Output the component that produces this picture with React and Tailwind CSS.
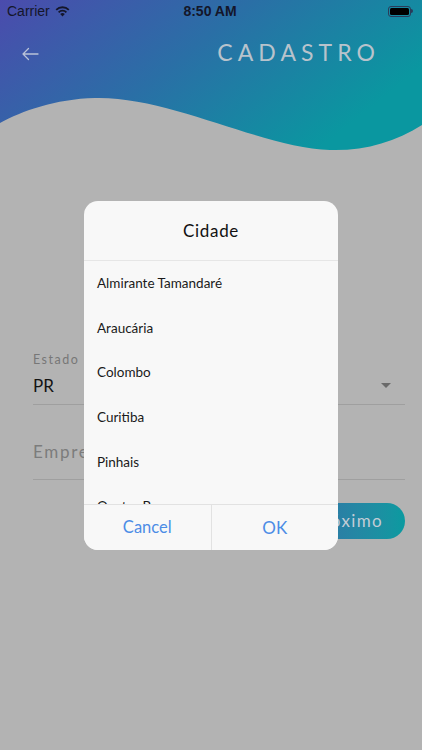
import React from "react";

const cities = ["Almirante Tamandaré", "Araucária", "Colombo", "Curitiba", "Pinhais", "Quatro Barras"];

export default function App() {
  return (
    <div className="relative w-[422px] h-[750px] overflow-hidden bg-[#b3b3b3]" style={{ fontFamily: "Lato, 'Noto Sans', sans-serif" }}>
      {/* Header */}
      <div className="relative h-[160px]">
        <svg className="absolute inset-0" width="422" height="160" viewBox="0 0 422 160">
          <defs>
            <linearGradient id="hg" x1="0" y1="0" x2="1" y2="0.45">
              <stop offset="0" stopColor="#4b4bad" />
              <stop offset="0.5" stopColor="#2a6fa6" />
              <stop offset="1" stopColor="#0a97a0" />
            </linearGradient>
          </defs>
          <path d="M0 0 H422 V125 C395 142 365 151 330 150 C262 148 170 96 95 98 C55 99 22 111 0 123 Z" fill="url(#hg)" />
        </svg>
        <div className="relative flex flex-col">
          {/* status bar */}
          <div className="h-[22px] flex items-center px-[7px] text-[#14162a]" style={{ fontFamily: "'Liberation Sans', Arial, sans-serif" }}>
            <div className="flex-1 flex items-center gap-[5px] text-[14px]">
              <span>Carrier</span>
              <svg width="15" height="11" viewBox="0 0 15 11">
                <path d="M7.5 10.5 L5.2 8 A3.3 3.3 0 0 1 9.8 8 Z" fill="#14162a" />
                <path d="M3.6 6.3 A5.6 5.6 0 0 1 11.4 6.3" stroke="#14162a" strokeWidth="1.8" fill="none" />
                <path d="M1.2 3.8 A9 9 0 0 1 13.8 3.8" stroke="#14162a" strokeWidth="1.8" fill="none" />
              </svg>
            </div>
            <div className="flex-1 text-center text-[14px] font-bold">8:50 AM</div>
            <div className="flex-1 flex justify-end pr-[2px]">
              <div className="flex items-center">
                <div className="w-[23px] h-[11px] rounded-[3px] border border-[#2a3c5a] p-[1px]">
                  <div className="w-full h-full rounded-[1.5px] bg-[#000]" />
                </div>
                <div className="w-[1.5px] h-[4px] bg-[#2a3c5a] rounded-r-sm" />
              </div>
            </div>
          </div>
          {/* nav */}
          <div className="h-[60px] flex items-center justify-between pl-[21px] pr-[47px]">
            <svg width="18" height="14" viewBox="0 0 18 14" className="mt-[3px]">
              <path d="M17 7 H2 M7.5 1.5 L2 7 L7.5 12.5" stroke="#b9c2d8" strokeWidth="1.3" fill="none" strokeLinecap="round" strokeLinejoin="round" />
            </svg>
            <span className="text-[23px] tracking-[0.22em] text-[#b8c3cc] mr-[-5px]">CADASTRO</span>
          </div>
        </div>
      </div>

      {/* Form */}
      <div className="flex flex-col pl-[33px] pr-[17px] pt-[191px]">
        <span className="text-[12.5px] tracking-[0.12em] text-[#777]">Estado</span>
        <div className="flex items-center justify-between border-b border-[#9f9f9f] h-[35px] pb-[2px]">
          <span className="text-[17px] text-[#141414]">PR</span>
          <svg width="12" height="7" viewBox="0 0 12 7" className="mr-[13px]">
            <path d="M1 1 H11 L6 6 Z" fill="#6a6a6a" />
          </svg>
        </div>
        <div className="flex items-center border-b border-[#9f9f9f] h-[75px] pt-[20px]">
          <span className="text-[17px] tracking-[0.1em] text-[#7c7c7c]">Empresa</span>
        </div>
        <div className="flex justify-end mt-[23px]">
          <div className="w-[180px] h-[36px] rounded-full bg-gradient-to-r from-[#3b4fa9] to-[#0a9aa0] flex items-center justify-end pr-[22px]">
            <span className="text-[17px] tracking-[0.08em] text-[#c3ccd6]">Próximo</span>
          </div>
        </div>
      </div>

      {/* Dialog */}
      <div className="absolute left-[84px] top-[201px] w-[254px] h-[349px] rounded-[14px] bg-[#f8f8f8] flex flex-col overflow-hidden">
        <div className="h-[60px] flex items-center justify-center border-b border-[#e6e6e6] shrink-0">
          <span className="text-[17px] tracking-[0.04em] text-[#111]">Cidade</span>
        </div>
        <div className="flex-1 overflow-hidden flex flex-col">
          {cities.map((c) => (
            <div key={c} className="h-[44.6px] shrink-0 flex items-center px-[13px] text-[13.5px] text-[#1a1a1a]">
              {c}
            </div>
          ))}
        </div>
        <div className="h-[46px] shrink-0 flex border-t border-[#e2e2e2] relative bg-[#f8f8f8]">
          <div className="flex-1 flex items-center justify-center border-r border-[#e2e2e2] text-[16.5px] text-[#4c8ce6]">Cancel</div>
          <div className="flex-1 flex items-center justify-center text-[17px] text-[#4c8ce6]">OK</div>
        </div>
      </div>
    </div>
  );
}
